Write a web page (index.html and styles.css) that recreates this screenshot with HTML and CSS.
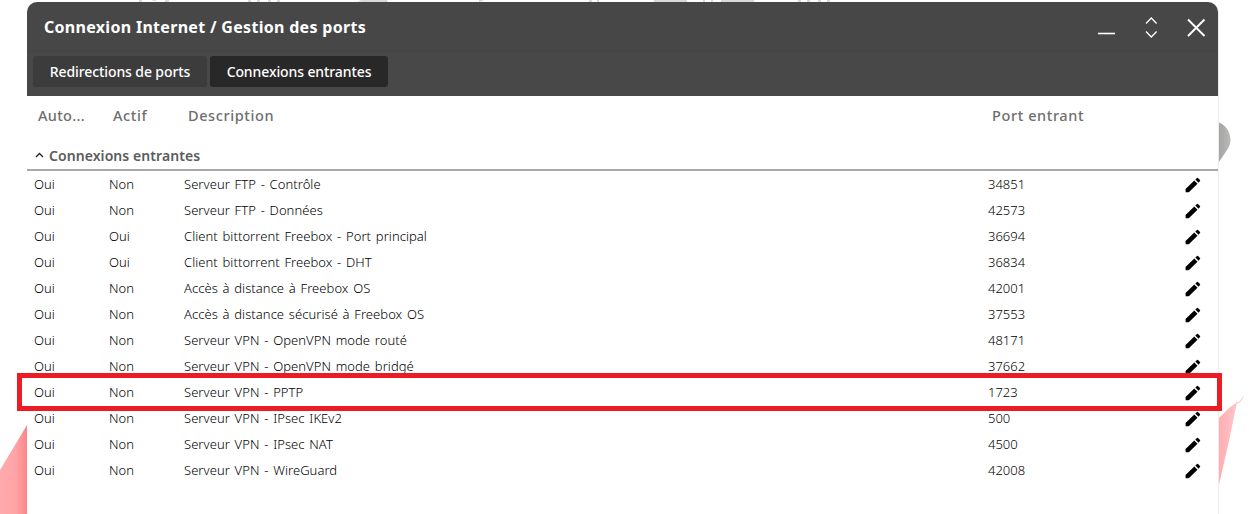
FILE: index.html
```
<!DOCTYPE html>
<html lang="fr">
<head>
    <meta charset="utf-8">
    <title>Gestion des ports</title>
    <link rel="stylesheet" href="styles.css">
</head>
<body>
<svg id="wallpaper" width="1250" height="514" viewBox="0 0 1250 514">
    <defs>
        <linearGradient id="pink" x1="0" x2="1" y1="0" y2="0">
            <stop offset="0" stop-color="#ffabae"/>
            <stop offset="0.6" stop-color="#ffa3a5"/>
            <stop offset="1" stop-color="#fb8587"/>
        </linearGradient>
        <linearGradient id="pink2" x1="0" x2="1" y1="0" y2="0">
            <stop offset="0" stop-color="#ffaaae"/>
            <stop offset="1" stop-color="#ffc6c8"/>
        </linearGradient>
        <linearGradient id="gray" x1="0" x2="1" y1="0" y2="0">
            <stop offset="0" stop-color="#a2a2a0"/>
            <stop offset="1" stop-color="#b9b9b8"/>
        </linearGradient>
    </defs>
    <path fill="#d9d9d9" d="M139 0h3v2h-3zM152 0h5l-2 1h-2zM165 0h4v2h-4zM248 0h3v2h-3zM257 0h3v2h-3zM268 0h3v2h-3zM277 0h3v2h-3zM361 0h26l1 2h-30zM479 0h5l-4 2h-1zM589 0h3v2h-3zM597 0h2v2h-2zM654 0h33v2h-33zM703 0h2v2h-2zM711 0h2v2h-2zM721 0h33v2h-33zM798 0h3v2h-3zM807 0h3v2h-3zM818 0h3v2h-3zM827 0h3v2h-3z"/>
    <path fill="url(#gray)" d="M1217 122C1226 124 1230 132 1230.500 140C1230.500 147 1226 151 1217 165z"/>
    <path fill="url(#pink)" d="M0 470L27 425V514H0z"/>
    <path fill="url(#pink2)" d="M1217 420L1229 408L1237 402L1229 441L1218 489z"/>
    <path fill="none" stroke="#ffc3c5" d="M1236 403l4-1l3-5"/>
</svg>

<div id="window">
    <header>
        <h1>Connexion Internet / Gestion des ports</h1>
        <div id="tools">
            <svg width="20" height="24" viewBox="0 0 20 24"><path d="M2 18.500h17" stroke-width="1.600"/></svg>
            <svg width="20" height="24" viewBox="0 0 20 24"><path d="M5 8.500l5.300-5.500l5.300 5.500M5 16.500l5.300 5.500l5.300-5.500" stroke-width="1.300"/></svg>
            <svg width="20" height="24" viewBox="0 0 20 24"><path d="M2 4.500l16.500 16.500M18.500 4.500L2 21" stroke-width="1.900"/></svg>
        </div>
    </header>
    <nav>
        <button class="tab">Redirections de ports</button>
        <button class="tab active">Connexions entrantes</button>
    </nav>
    <div id="columns" class="line">
        <span class="auto">Auto...</span>
        <span>Actif</span>
        <span>Description</span>
        <span>Port entrant</span>
    </div>
    <div id="group">
        <svg width="9" height="6" viewBox="0 0 9 6"><path d="M1 5l3.500-3.500L8 5"/></svg>
        <span>Connexions entrantes</span>
    </div>
    <div id="rows"></div>
</div>

<script>
    const ports = [
        ['Oui', 'Non', 'Serveur FTP - Contrôle', 34851],
        ['Oui', 'Non', 'Serveur FTP - Données', 42573],
        ['Oui', 'Oui', 'Client bittorrent Freebox - Port principal', 36694],
        ['Oui', 'Oui', 'Client bittorrent Freebox - DHT', 36834],
        ['Oui', 'Non', 'Accès à distance à Freebox OS', 42001],
        ['Oui', 'Non', 'Accès à distance sécurisé à Freebox OS', 37553],
        ['Oui', 'Non', 'Serveur VPN - OpenVPN mode routé', 48171],
        ['Oui', 'Non', 'Serveur VPN - OpenVPN mode bridgé', 37662],
        ['Oui', 'Non', 'Serveur VPN - PPTP', 1723],
        ['Oui', 'Non', 'Serveur VPN - IPsec IKEv2', 500],
        ['Oui', 'Non', 'Serveur VPN - IPsec NAT', 4500],
        ['Oui', 'Non', 'Serveur VPN - WireGuard', 42008]
    ];
    const pencil = '<svg width="16" height="16" viewBox="0 0 16 16"><path d="M0.500 12L9.300 3.500L12.500 6.700L3.800 15.300H0.700zM10.300 2.500L12 0.900Q12.500 0.500 13 1L15 3Q15.500 3.500 15 4L13.500 5.700z"/></svg>';

    ports.forEach(([auto, actif, desc, port]) => {
        const selected = port === 1723 ? ' selected' : '';
        document.getElementById('rows').innerHTML +=
            `<div class="line row${selected}"><span>${auto}</span><span>${actif}</span><span class="desc">${desc}</span><span>${port}</span>${pencil}</div>`;
    });
</script>

</body>
</html>
```
FILE: styles.css
```
body {
    font-family: "Noto Sans", "Open Sans", sans-serif;
    background-color: #fff;
    margin: 0;
    height: 514px;
    overflow: hidden;
}

#wallpaper {
    position: absolute;
    top: 0;
    left: 0;
    z-index: -1;
}

#window {
    width: 1191px;
    height: 512px;
    margin: 2px 0 0 27px;
    background-color: #fff;
    border-radius: 10px 10px 0 0;
    box-shadow: 1px 0 0 #ececec;
}

header {
    display: flex;
    justify-content: space-between;
    box-sizing: border-box;
    height: 50px;
    padding: 13px 12px 0 17px;
    background-color: #474747;
    border-bottom: 1px solid #444;
    border-radius: 10px 10px 0 0;
}

h1 {
    margin: 0;
    color: #fff;
    font-size: 16px;
    line-height: 24px;
    font-weight: 700;
    letter-spacing: 0.3px;
}

#tools {
    display: flex;
    gap: 25px;
}

#tools svg {
    fill: none;
    stroke: #fff;
}

nav {
    display: flex;
    gap: 3px;
    box-sizing: border-box;
    height: 44px;
    padding: 4px 6px;
    background-color: #484848;
}

.tab {
    width: 174px;
    height: 31px;
    padding: 0;
    border: none;
    border-radius: 3px;
    background-color: #3c3c3c;
    color: #fff;
    font-family: inherit;
    font-size: 14px;
    font-weight: 500;
    letter-spacing: -0.1px;
    white-space: nowrap;
}

.tab.active {
    width: 178px;
    background-color: #282828;
}

.line {
    display: grid;
    grid-template-columns: 75px 75px 804px 197px 16px;
    align-items: center;
    white-space: nowrap;
}

#columns {
    height: 37px;
    padding-left: 11px;
    color: #6e6e6e;
    font-size: 14.5px;
    font-weight: 500;
    letter-spacing: 0.6px;
}

#columns .auto {
    letter-spacing: 0.3px;
}

#group {
    display: flex;
    align-items: center;
    gap: 5px;
    box-sizing: border-box;
    height: 38px;
    padding: 8px 0 0 8px;
    border-bottom: 2px solid #a9a9a9;
    color: #5c5c5c;
    font-size: 14px;
    font-weight: 600;
    letter-spacing: 0.07px;
}

#group svg {
    fill: none;
    stroke: #222;
    stroke-width: 1.3;
}

.row {
    position: relative;
    height: 26px;
    padding-left: 7px;
    color: #000;
    font-size: 13px;
    font-weight: 300;
}

.row .desc {
    letter-spacing: 0.05px;
    word-spacing: 1.3px;
}

.row svg {
    margin-top: 2px;
}

/* frame drawn over the neighbouring rows */
.selected::after {
    content: "";
    position: absolute;
    z-index: 1;
    top: -6px;
    left: -10px;
    width: 1195px;
    height: 28px;
    border: 5px solid #ed1c24;
}
```
